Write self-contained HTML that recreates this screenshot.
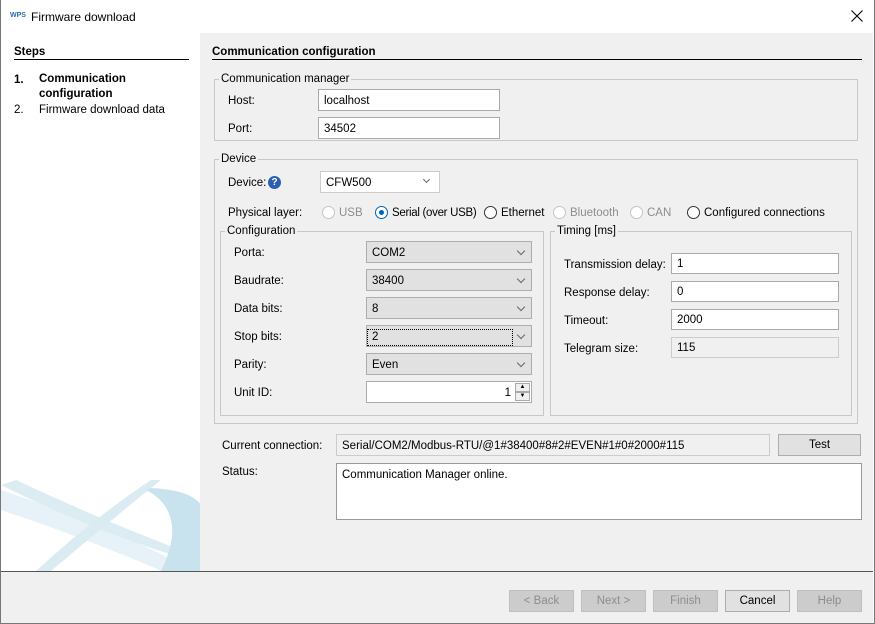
<!DOCTYPE html><html><head><style>
*{box-sizing:border-box;margin:0;padding:0}
body{width:875px;height:624px;background:#fff;font-family:"Liberation Sans",sans-serif;font-size:11.5px;color:#000;position:relative;overflow:hidden}
.a{position:absolute;white-space:nowrap}
.t{position:absolute;white-space:nowrap;line-height:16px}
.grp{position:absolute;border:1px solid #c8c8c8}
.gl{position:absolute;background:#f0f0f0;padding:0 2px;line-height:16px;top:-9px;left:4px}
.in{position:absolute;background:#fff;border:1px solid #aaa;padding:4px 5px 0;line-height:15px}
.sel{position:absolute;background:#e1e1e1;border:1px solid #adadad;padding:4px 5px 0;line-height:15px}
.sel:after{content:"";position:absolute;right:7px;top:6px;width:5px;height:5px;border-right:1px solid #666;border-bottom:1px solid #666;transform:rotate(45deg)}
.btn{position:absolute;top:590px;width:65px;height:22px;background:#ccc;border:1px solid #bfbfbf;color:#8d8d8d;text-align:center;line-height:21px}
.r{position:absolute;width:13px;height:13px;border-radius:50%;border:1px solid #333;background:#fff}
.r.d{border-color:#c4c4c4}
.dis{color:#8d8d8d}
</style></head><body>
<div class="a" style="left:0;top:0;width:875px;height:624px;border:1px solid #777;border-top:none"></div>
<div class="a" style="left:10px;top:12px;font-size:7px;font-weight:bold;color:#2a6ab3">WPS</div>
<div class="t" style="left:31px;top:9px;font-size:12px">Firmware download</div>
<svg class="a" style="left:851px;top:10px" width="12" height="12"><path d="M0.5 0.5L11.5 11.5M11.5 0.5L0.5 11.5" stroke="#000" stroke-width="1.1"/></svg>
<div class="a" style="left:200px;top:33px;width:673px;height:538px;background:#f0f0f0"></div>
<svg class="a" style="left:1px;top:480px" width="199" height="91">
<path d="M0 30 Q90 60 170 95 L200 95 Q120 50 0 10Z" fill="#e6f2f7"/>
<path d="M15 0 Q100 40 180 70 L175 76 Q90 50 0 5Z" fill="#dcecf3"/>
<path d="M50 91 Q110 40 160 0 L150 0 Q90 40 35 91Z" fill="#dbebf2"/>
<path d="M150 8 Q190 10 200 25 L200 91 L160 91 Q175 60 170 40 Q165 20 145 10Z" fill="#c9e3ee"/>
</svg>
<div class="t" style="left:14px;top:44px;font-weight:bold">Steps</div>
<div class="a" style="left:14px;top:59px;width:175px;height:1px;background:#000"></div>
<div class="t" style="left:14px;top:72px;font-weight:bold">1.</div>
<div class="t" style="left:39px;top:72px;font-weight:bold;line-height:15px">Communication<br>configuration</div>
<div class="t" style="left:14px;top:102px">2.</div>
<div class="t" style="left:39px;top:102px">Firmware download data</div>
<div class="t" style="left:212px;top:44px;font-weight:bold">Communication configuration</div>
<div class="a" style="left:212px;top:59px;width:650px;height:1px;background:#000"></div>

<div class="grp" style="left:214px;top:79px;width:644px;height:62px"><div class="gl">Communication manager</div></div>
<div class="t" style="left:228px;top:93px">Host:</div>
<div class="in" style="left:318px;top:89px;width:182px;height:22px">localhost</div>
<div class="t" style="left:228px;top:121px">Port:</div>
<div class="in" style="left:318px;top:117px;width:182px;height:22px">34502</div>

<div class="grp" style="left:214px;top:159px;width:644px;height:265px"><div class="gl">Device</div></div>
<div class="t" style="left:228px;top:175px">Device:</div>
<div class="a" style="left:268px;top:176px;width:13px;height:13px;border-radius:50%;background:#2b5fb0;color:#fff;font-size:10px;font-weight:bold;text-align:center;line-height:13px">?</div>
<div class="in" style="left:320px;top:171px;width:120px;height:22px;border-color:#ccc">CFW500</div>
<div class="a" style="left:424px;top:177px;width:5px;height:5px;border-right:1px solid #666;border-bottom:1px solid #666;transform:rotate(45deg)"></div>
<div class="t" style="left:228px;top:205px">Physical layer:</div>
<div class="r d" style="left:322px;top:206px"></div><div class="t dis" style="left:339px;top:205px">USB</div>
<div class="r" style="left:375px;top:206px;border-color:#0063b1"></div><div class="a" style="left:379px;top:210px;width:5px;height:5px;border-radius:50%;background:#0063b1"></div><div class="t" style="left:392px;top:205px;letter-spacing:-0.3px">Serial (over USB)</div>
<div class="r" style="left:484px;top:206px"></div><div class="t" style="left:501px;top:205px">Ethernet</div>
<div class="r d" style="left:553px;top:206px"></div><div class="t dis" style="left:570px;top:205px">Bluetooth</div>
<div class="r d" style="left:630px;top:206px"></div><div class="t dis" style="left:647px;top:205px">CAN</div>
<div class="r" style="left:687px;top:206px"></div><div class="t" style="left:704px;top:205px">Configured connections</div>

<div class="grp" style="left:220px;top:231px;width:324px;height:185px"><div class="gl">Configuration</div></div>
<div class="t" style="left:234px;top:245px">Porta:</div><div class="sel" style="left:366px;top:241px;width:166px;height:22px">COM2</div>
<div class="t" style="left:234px;top:273px">Baudrate:</div><div class="sel" style="left:366px;top:269px;width:166px;height:22px">38400</div>
<div class="t" style="left:234px;top:301px">Data bits:</div><div class="sel" style="left:366px;top:297px;width:166px;height:22px">8</div>
<div class="t" style="left:234px;top:329px">Stop bits:</div><div class="sel" style="left:366px;top:325px;width:166px;height:22px"><span style="outline:1px dotted #000;display:inline-block;width:144px;margin-left:-4px;padding-left:4px">2</span></div>
<div class="t" style="left:234px;top:357px">Parity:</div><div class="sel" style="left:366px;top:353px;width:166px;height:22px">Even</div>
<div class="t" style="left:234px;top:385px">Unit ID:</div>
<div class="in" style="left:366px;top:381px;width:166px;height:22px;text-align:right;padding-right:20px">1</div>
<div class="a" style="left:515px;top:383px;width:15px;height:9px;border:1px solid #aaa;background:#f0f0f0;font-size:6px;text-align:center;line-height:7px">▲</div>
<div class="a" style="left:515px;top:392px;width:15px;height:9px;border:1px solid #aaa;background:#f0f0f0;font-size:6px;text-align:center;line-height:7px">▼</div>

<div class="grp" style="left:550px;top:231px;width:302px;height:185px"><div class="gl">Timing [ms]</div></div>
<div class="t" style="left:564px;top:257px">Transmission delay:</div><div class="in" style="left:671px;top:253px;width:168px;height:21px;padding-top:3px">1</div>
<div class="t" style="left:564px;top:285px">Response delay:</div><div class="in" style="left:671px;top:281px;width:168px;height:21px;padding-top:3px">0</div>
<div class="t" style="left:564px;top:313px">Timeout:</div><div class="in" style="left:671px;top:309px;width:168px;height:21px;padding-top:3px">2000</div>
<div class="t" style="left:564px;top:341px">Telegram size:</div><div class="in" style="left:671px;top:337px;width:168px;height:21px;padding-top:3px;background:#f0f0f0;border-color:#ccc">115</div>

<div class="t" style="left:222px;top:438px">Current connection:</div>
<div class="in" style="left:336px;top:434px;width:434px;height:22px;background:#f0f0f0;border-color:#ccc">Serial/COM2/Modbus-RTU/@1#38400#8#2#EVEN#1#0#2000#115</div>
<div class="a" style="left:778px;top:434px;width:83px;height:22px;background:#e1e1e1;border:1px solid #adadad;text-align:center;line-height:21px">Test</div>
<div class="t" style="left:222px;top:464px">Status:</div>
<div class="in" style="left:336px;top:463px;width:526px;height:57px;border-color:#999">Communication Manager online.</div>

<div class="a" style="left:1px;top:571px;width:872px;height:52px;background:#f0f0f0;border-top:1px solid #555"></div>
<div class="btn" style="left:509px">&lt; Back</div>
<div class="btn" style="left:581px">Next &gt;</div>
<div class="btn" style="left:653px">Finish</div>
<div class="btn" style="left:725px;background:#e1e1e1;border-color:#adadad;color:#000">Cancel</div>
<div class="btn" style="left:797px">Help</div>
</body></html>
